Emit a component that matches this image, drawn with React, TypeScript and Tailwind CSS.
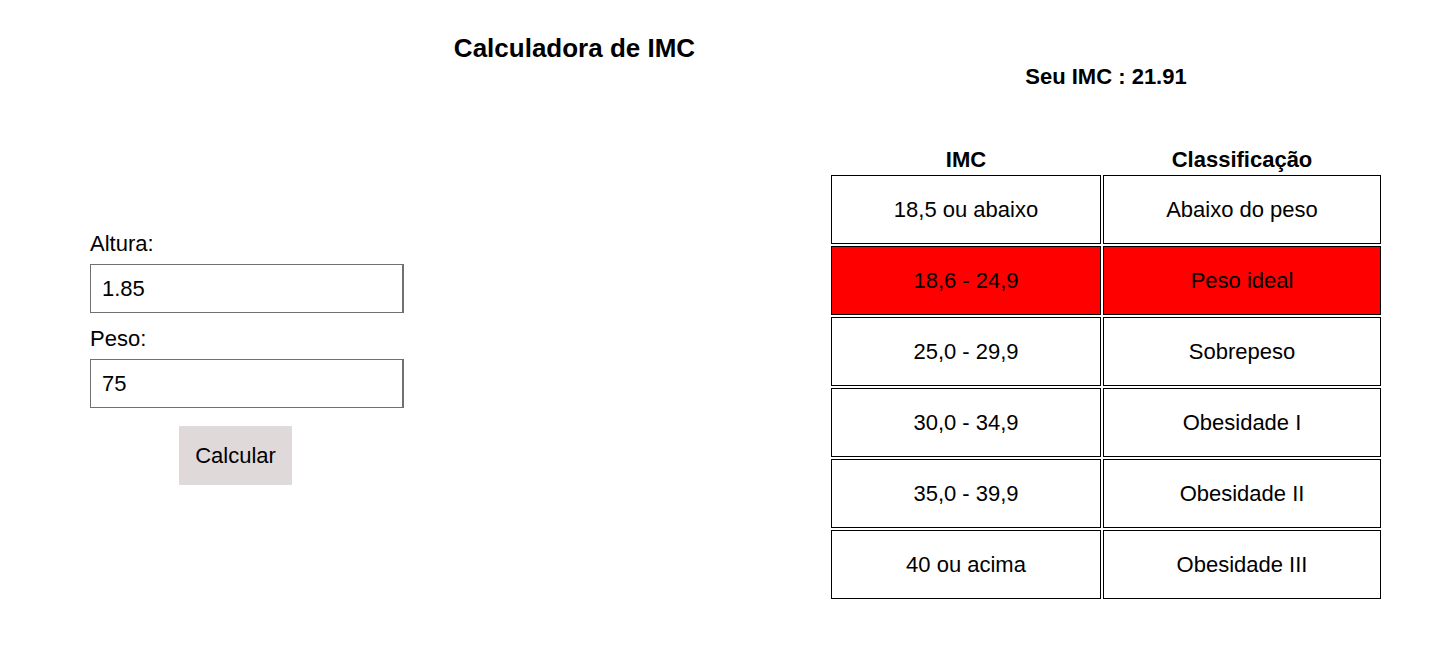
import { useState } from "react";
import type { FormEvent } from "react";

type Row = { range: string; label: string; max: number };

const rows: Row[] = [
  { range: "18,5 ou abaixo", label: "Abaixo do peso", max: 18.5 },
  { range: "18,6 - 24,9", label: "Peso ideal", max: 24.9 },
  { range: "25,0 - 29,9", label: "Sobrepeso", max: 29.9 },
  { range: "30,0 - 34,9", label: "Obesidade I", max: 34.9 },
  { range: "35,0 - 39,9", label: "Obesidade II", max: 39.9 },
  { range: "40 ou acima", label: "Obesidade III", max: Infinity },
];

type FieldProps = { id: string; label: string; value: string; onChange: (value: string) => void };

function Field({ id, label, value, onChange }: FieldProps) {
  return (
    <div className="flex flex-col gap-2">
      <label htmlFor={id} className="leading-6">{label}</label>
      <input
        id={id}
        type="text"
        inputMode="decimal"
        value={value}
        onChange={(e) => onChange(e.target.value)}
        className="h-[49px] w-full border border-r-2 border-[#707070] bg-white px-[11px] outline-none"
      />
    </div>
  );
}

export default function App() {
  const [height, setHeight] = useState("1.85");
  const [weight, setWeight] = useState("75");
  const [bmi, setBmi] = useState(75 / (1.85 * 1.85));

  const calculate = (e: FormEvent) => {
    e.preventDefault();
    const h = parseFloat(height.replace(",", "."));
    const w = parseFloat(weight.replace(",", "."));
    if (h > 0 && w > 0) setBmi(w / (h * h));
  };

  const active = rows.findIndex((row) => Math.round(bmi * 10) / 10 <= row.max);

  return (
    <main className="flex min-h-screen bg-white pr-[55px] pl-[90px] font-['Liberation_Sans',Arial,sans-serif] text-[22px] text-black">
      <form onSubmit={calculate} className="flex w-[314px] shrink-0 flex-col gap-[14px] pt-[232px]">
        <Field id="altura" label="Altura:" value={height} onChange={setHeight} />
        <Field id="peso" label="Peso:" value={weight} onChange={setWeight} />
        <button type="submit" className="mt-1 mr-[23px] h-[59px] min-w-[113px] self-center rounded-[1px] bg-[#dfd9d9] px-4">
          Calcular
        </button>
      </form>
      <h1 className="flex-1 pt-8 pr-[84px] text-center text-[26px] leading-8 font-bold whitespace-nowrap">
        Calculadora de IMC
      </h1>
      <section className="flex w-[554px] shrink-0 flex-col pt-[65px]">
        <h2 className="text-center leading-6 font-bold">Seu IMC : {bmi.toFixed(2)}</h2>
        <table className="mt-14 w-full border-separate border-spacing-0.5 text-center">
          <thead>
            <tr className="leading-[26px]">
              <th className="w-[270px] p-0">IMC</th>
              <th className="p-0">Classificação</th>
            </tr>
          </thead>
          <tbody>
            {rows.map((row, i) => (
              <tr key={row.label} className={i === active ? "bg-[#ff0000]" : ""}>
                <td className="h-[69px] border border-black p-0">{row.range}</td>
                <td className="h-[69px] border border-black p-0">{row.label}</td>
              </tr>
            ))}
          </tbody>
        </table>
      </section>
    </main>
  );
}
